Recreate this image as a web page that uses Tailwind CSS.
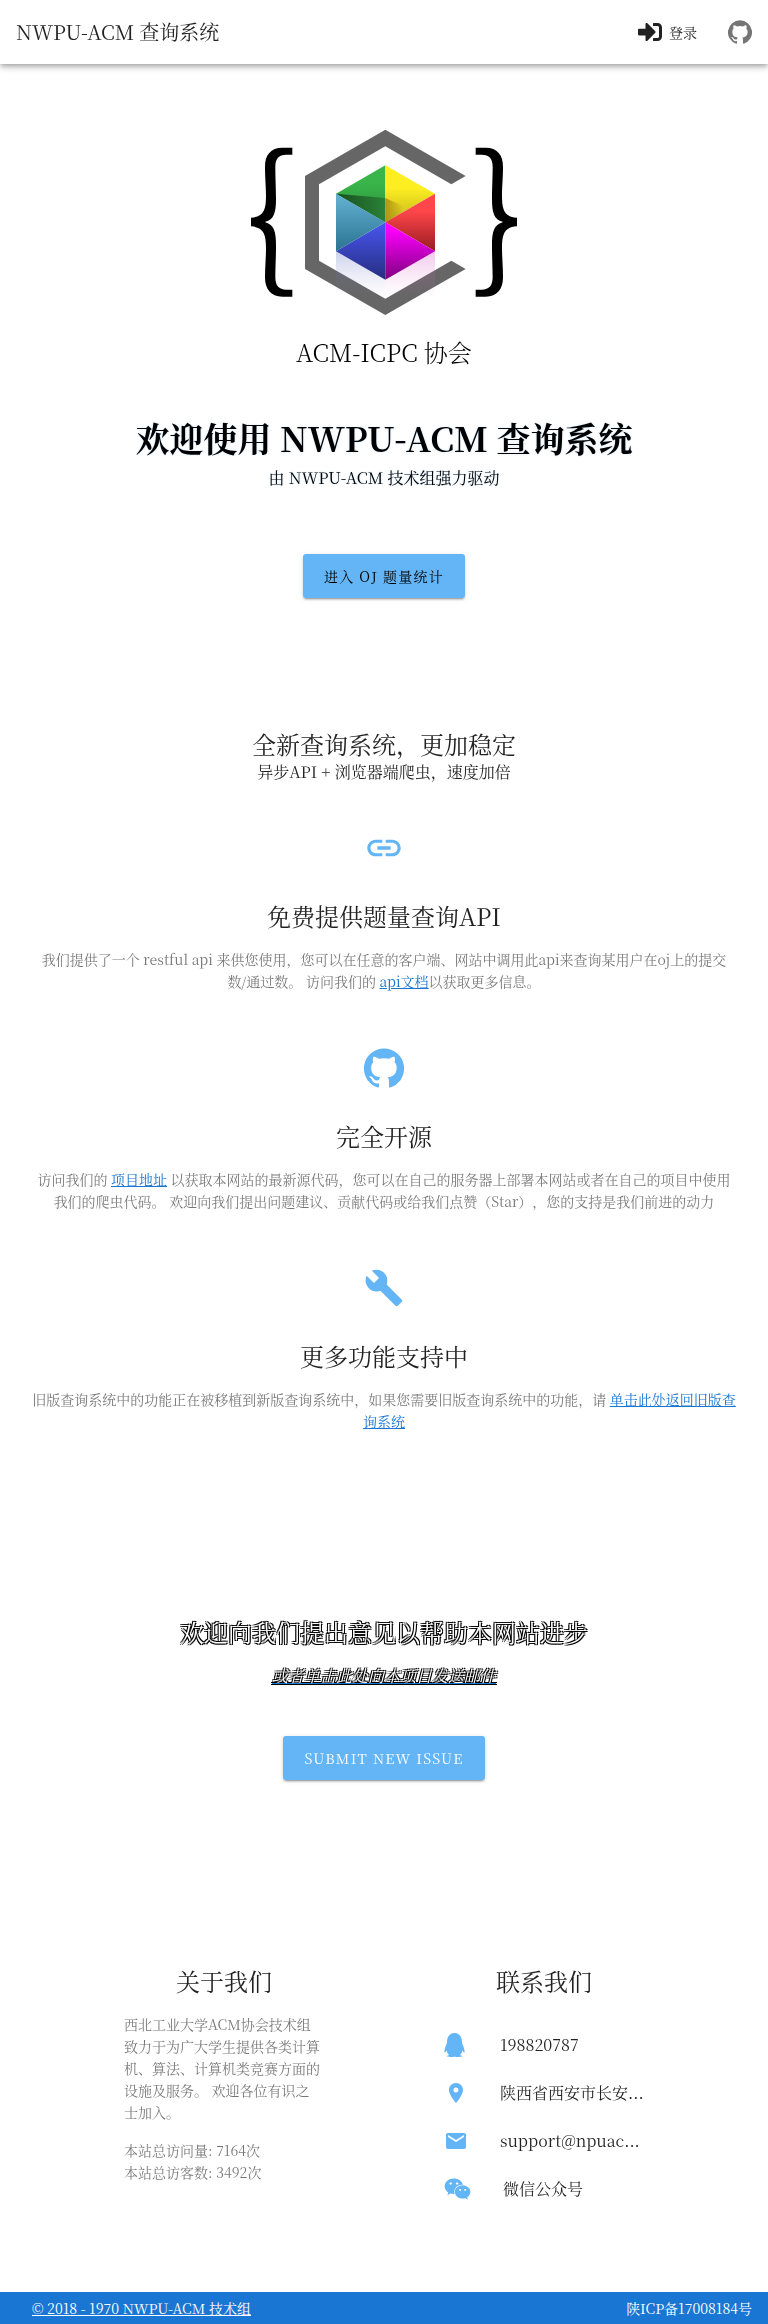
<!DOCTYPE html>
<html lang="zh-CN">
<head>
<meta charset="utf-8">
<meta name="viewport" content="width=device-width, initial-scale=1">
<title>NWPU-ACM 查询系统</title>
<script src="https://cdn.jsdelivr.net/npm/@tailwindcss/browser@4"></script>
</head>
<body class="bg-white font-['Noto_Serif_CJK_SC','Noto_Serif_SC','Source_Han_Serif_SC','Liberation_Serif','Noto_Sans_CJK_SC',serif] text-sm text-black/87 [text-spacing-trim:space-all]">
<svg class="hidden" aria-hidden="true">
  <symbol id="github" viewBox="0 0 24 24"><path fill="currentColor" d="M12 .3a12 12 0 0 0-3.8 23.4c.6.1.8-.3.8-.6v-2c-3.3.7-4-1.6-4-1.6-.6-1.4-1.4-1.8-1.4-1.8-1-.7.1-.7.1-.7 1.2 0 1.9 1.2 1.9 1.2 1 1.8 2.8 1.3 3.5 1 0-.8.4-1.3.7-1.6-2.7-.3-5.5-1.3-5.5-6 0-1.2.5-2.3 1.3-3.1-.2-.4-.6-1.6 0-3.2 0 0 1-.3 3.4 1.2a11.500 11.500 0 0 1 6 0c2.300-1.500 3.300-1.200 3.300-1.200.6 1.600.2 2.800 0 3.200.9.8 1.300 1.900 1.300 3.200 0 4.600-2.800 5.600-5.500 5.900.5.4.9 1 .9 2.200v3.300c0 .3.1.7.8.6A12 12 0 0 0 12 .3"/></symbol>
</svg>

<header class="relative flex h-16 items-center bg-white px-4 shadow-[0_2px_4px_-1px_rgba(0,0,0,.2),0_4px_5px_rgba(0,0,0,.14),0_1px_10px_rgba(0,0,0,.12)]">
  <h1 class="text-xl will-change-transform">NWPU-ACM 查询系统</h1>
  <nav class="ml-auto flex items-center gap-[31px] will-change-transform">
    <a href="#login" class="flex items-center gap-[7px]">
      <svg class="h-6 w-6" viewBox="0 0 512 512" fill="currentColor" aria-hidden="true"><path d="M416 448h-84c-6.600 0-12-5.400-12-12v-40c0-6.600 5.400-12 12-12h84c17.700 0 32-14.300 32-32V160c0-17.700-14.300-32-32-32h-84c-6.600 0-12-5.400-12-12V76c0-6.600 5.400-12 12-12h84c53 0 96 43 96 96v192c0 53-43 96-96 96zm-47-209L201 71c-15-15-41-4.500-41 17v96H24c-13.300 0-24 10.700-24 24v96c0 13.300 10.700 24 24 24h136v96c0 21.500 26 32 41 17l168-168c9.300-9.400 9.300-24.600 0-34z"/></svg>
      登录
    </a>
    <a href="#github" aria-label="GitHub" class="text-black/54"><svg class="h-6 w-6"><use href="#github"/></svg></a>
  </nav>
</header>

<main class="will-change-transform">
  <section class="flex flex-col items-center pt-16 text-center text-black">
    <svg class="h-[188px] w-[270px]" viewBox="57 55 810 564" role="img" aria-label="ACM-ICPC 协会">
      <defs>
        <linearGradient id="g" x2="0" y2="1"><stop stop-color="#39b54a" offset=".3"/><stop offset="1" stop-color="#2c8f3a"/></linearGradient>
        <linearGradient id="gd" x1="0" x2="1"><stop stop-color="#184f20"/><stop offset="1" stop-color="#2b8237"/></linearGradient>
        <linearGradient id="y" x2="0" y2="1"><stop stop-color="#fcee21" offset=".4"/><stop offset="1" stop-color="#c5b51b"/></linearGradient>
        <linearGradient id="yd"><stop stop-color="#ad9518"/><stop offset="1" stop-color="#ad9518" stop-opacity="0"/></linearGradient>
        <linearGradient id="r" x2="0" y2="1"><stop stop-color="#ff464b" offset=".3"/><stop offset="1" stop-color="#971c20"/></linearGradient>
        <linearGradient id="m" x2="0" y2="1"><stop stop-color="#ff00ff" offset=".1"/><stop offset="1" stop-color="#800080"/></linearGradient>
        <linearGradient id="b" x2="0" y2="1"><stop stop-color="#4856f0"/><stop offset="1" stop-color="#262e80"/></linearGradient>
        <linearGradient id="c" x2="0" y2="1"><stop stop-color="#65b2d3"/><stop offset="1" stop-color="#2a7391"/></linearGradient>
        <linearGradient id="s1" x2="0" y2="1"><stop stop-color="#4a62b8" stop-opacity=".28"/><stop offset="1" stop-color="#8080c0" stop-opacity="0"/></linearGradient>
        <linearGradient id="s2" x2="0" y2="1"><stop stop-color="#d14fc0" stop-opacity=".3"/><stop offset="1" stop-color="#e080d0" stop-opacity="0"/></linearGradient>
      </defs>
      <path fill="#666" d="M707 199 466 60 225 199V478L466 616 707 478 664 453 466 567 267 453V224L466 110 664 224z"/>
      <path fill="url(#s1)" d="M318 425 466 510V562H318z"/><path fill="url(#s2)" d="M615 425 466 510V562H615z"/>
      <path fill="url(#g)" d="M466 167 318 252 466 338z"/><path fill="url(#gd)" d="M318 252 466 265V338z"/>
      <path fill="url(#y)" d="M466 167 615 252 466 338z"/><path fill="url(#yd)" d="M466 265 520 290V307L466 338z"/>
      <path fill="url(#r)" d="M615 252V425L466 338z"/><path fill="url(#m)" d="M615 425 466 510V338z"/>
      <path fill="url(#b)" d="M466 510 318 425 466 338z"/><path fill="url(#c)" d="M318 425V252L466 338z"/>
      <path id="brace" fill="#000" d="M187 114H157C122 114 105 136 105 171C105 205 108 230 108 259C108 300 101 322 63 324V350C101 352 108 374 108 415C108 445 105 470 105 503C105 538 122 561 157 561H187V540H169C146 540 136 527 136 503C136 470 138 445 138 407C138 365 132 346 106 338V336C132 329 138 309 138 267C138 230 136 205 136 171C136 147 146 135 169 135H187z"/>
      <use href="#brace" transform="matrix(-1 0 0 1 924 0)"/>
    </svg>
    <p class="mt-5 text-2xl font-light">ACM-ICPC 协会</p>
    <h2 class="mt-[50px] text-[34px] leading-10 font-bold text-shadow-[0_0_2px_rgb(100_181_246/0.4)]">欢迎使用 NWPU-ACM 查询系统</h2>
    <p class="mt-2 text-base text-shadow-[0_0_2px_rgb(100_181_246/0.4)]">由 NWPU-ACM 技术组强力驱动</p>
    <button type="button" class="mt-16 h-11 rounded-[3px] bg-[#64b5f6] px-[21px] text-sm tracking-[0.09em] shadow-[0_3px_1px_-2px_rgba(0,0,0,.2),0_2px_2px_rgba(0,0,0,.14),0_1px_5px_rgba(0,0,0,.12)]">进入 OJ 题量统计</button>
  </section>

  <section class="px-8 pt-[130px] text-center">
    <h2 class="text-2xl">全新查询系统，更加稳定</h2>
    <p class="text-base">异步API + 浏览器端爬虫，速度加倍</p>

    <article class="mt-11">
      <svg class="mx-auto h-10 w-10 text-[#64b5f6]" viewBox="0 0 24 24" fill="currentColor" aria-hidden="true"><path d="M3.900 12c0-1.710 1.390-3.100 3.100-3.100h4V7H7c-2.760 0-5 2.240-5 5s2.240 5 5 5h4v-1.900H7c-1.710 0-3.100-1.390-3.100-3.100zM8 13h8v-2H8v2zm9-6h-4v1.900h4c1.710 0 3.100 1.390 3.100 3.100s-1.390 3.100-3.100 3.100h-4V17h4c2.760 0 5-2.240 5-5s-2.240-5-5-5z"/></svg>
      <h3 class="mt-8 text-2xl">免费提供题量查询API</h3>
      <p class="mt-4 leading-[22px] text-black/54">我们提供了一个 restful api 来供您使用，您可以在任意的客户端、网站中调用此api来查询某用户在oj上的提交<span class="whitespace-nowrap">数/通过数。</span> 访问我们的 <a href="#api" class="text-[#1976d2] underline">api文档</a>以获取更多信息。</p>
    </article>
    <article class="mt-14">
      <svg class="mx-auto h-10 w-10 text-[#64b5f6]" aria-hidden="true"><use href="#github"/></svg>
      <h3 class="mt-8 text-2xl">完全开源</h3>
      <p class="mt-4 leading-[22px] text-black/54">访问我们的 <a href="#repo" class="text-[#1976d2] underline">项目地址</a> 以获取本网站的最新源代码，您可以在自己的服务器上部署本网站或者在自己的项目中使用我们的爬虫代码。 欢迎向我们提出问题建议、贡献代码或给我们点赞（Star），您的支持是我们前进的动力</p>
    </article>
    <article class="mt-14">
      <svg class="mx-auto h-10 w-10 text-[#64b5f6]" viewBox="0 0 24 24" fill="currentColor" aria-hidden="true"><path d="M22.700 19l-9.100-9.100c.9-2.300.4-5-1.500-6.900-2-2-5-2.400-7.400-1.300L9 6 6 9 1.600 4.700C.4 7.100.9 10.100 2.900 12.100c1.900 1.900 4.600 2.400 6.900 1.500l9.100 9.100c.4.4 1 .4 1.400 0l2.300-2.300c.5-.4.5-1.100.1-1.400z"/></svg>
      <h3 class="mt-8 text-2xl">更多功能支持中</h3>
      <p class="mt-4 leading-[22px] text-black/54">旧版查询系统中的功能正在被移植到新版查询系统中，如果您需要旧版查询系统中的功能，请 <a href="#old" class="text-[#1976d2] underline">单击此处返回旧版查询系统</a></p>
    </article>
  </section>

  <section class="flex flex-col items-center pt-[184px] text-center text-white">
    <h2 class="text-2xl text-shadow-[1px_1px_#000,-1px_-1px_#000,1px_-1px_#000,-1px_1px_#000]">欢迎向我们提出意见以帮助本网站进步</h2>
    <a href="#mail" class="mt-4 text-base text-[#1976d2] underline text-shadow-[1px_1px_#000,-1px_-1px_#000,1px_-1px_#000,-1px_1px_#000]"><em class="text-white">或者单击此处向本项目发送邮件</em></a>
    <button type="button" class="mt-12 h-11 rounded-[3px] bg-[#64b5f6] px-[21px] text-sm tracking-[0.09em] shadow-[0_3px_1px_-2px_rgba(0,0,0,.2),0_2px_2px_rgba(0,0,0,.14),0_1px_5px_rgba(0,0,0,.12)]">SUBMIT NEW ISSUE</button>
  </section>

  <section class="mx-auto grid max-w-[640px] grid-cols-2 pt-[185px] pb-[79px]">
    <div class="mx-auto w-[232px] px-4">
      <h2 class="text-center text-2xl">关于我们</h2>
      <p class="mt-4 pr-1 leading-[22px] text-black/54">西北工业大学ACM协会技术组<br>致力于为广大学生提供各类计算机、算法、计算机类竞赛方面的设施及服务。 欢迎各位有识之士加入。</p>
      <p class="mt-4 leading-[22px] text-black/54">本站总访问量: 7164次<br>本站总访客数: 3492次</p>
    </div>
    <div class="mx-auto w-[232px] px-4">
      <h2 class="text-center text-2xl">联系我们</h2>
      <ul class="mt-6 text-base">
        <li class="flex h-12 items-center"><span class="w-14 shrink-0 text-[#64b5f6]"><svg class="h-6 w-[21px]" viewBox="0 0 448 512" fill="currentColor" aria-hidden="true"><path d="M433.754 420.445c-11.526 1.393-44.860-52.741-44.860-52.741 0 31.345-16.136 72.247-51.051 101.786 16.842 5.192 54.843 19.167 45.803 34.421-7.316 12.343-125.510 7.881-159.632 4.037-34.122 3.844-152.316 8.306-159.632-4.037-9.045-15.250 28.918-29.214 45.783-34.415-34.920-29.539-51.059-70.445-51.059-101.792 0 0-33.334 54.134-44.859 52.741-5.370-.65-12.424-29.644 9.347-99.704 10.261-33.024 21.995-60.478 40.144-105.779C60.683 98.063 108.982.006 224 0c113.737.006 163.156 96.133 160.264 214.963 18.118 45.223 29.912 72.850 40.144 105.778 21.768 70.060 14.716 99.053 9.346 99.704z"/></svg></span><span>198820787</span></li>
        <li class="flex h-12 items-center"><span class="w-14 shrink-0 text-[#64b5f6]"><svg class="h-6 w-6" viewBox="0 0 24 24" fill="currentColor" aria-hidden="true"><path d="M12 2C8.130 2 5 5.130 5 9c0 5.250 7 13 7 13s7-7.750 7-13c0-3.870-3.130-7-7-7zm0 9.500a2.500 2.500 0 1 1 0-5 2.500 2.500 0 0 1 0 5z"/></svg></span><span class="whitespace-nowrap">陕西省西安市长安...</span></li>
        <li class="flex h-12 items-center"><span class="w-14 shrink-0 text-[#64b5f6]"><svg class="h-6 w-6" viewBox="0 0 24 24" fill="currentColor" aria-hidden="true"><path d="M20 4H4c-1.100 0-2 .9-2 2v12c0 1.100.9 2 2 2h16c1.100 0 2-.9 2-2V6c0-1.100-.9-2-2-2zm0 4l-8 5-8-5V6l8 5 8-5v2z"/></svg></span><span class="whitespace-nowrap">support@npuac...</span></li>
        <li class="flex h-12 items-center"><span class="w-[59px] shrink-0 text-[#64b5f6]"><svg class="h-6 w-[27px]" viewBox="0 0 576 512" fill="currentColor" aria-hidden="true"><path d="M385.200 167.600c6.400 0 12.600.3 18.800 1.100C387.400 90.300 303.300 32 207.700 32 100.500 32 13 104.800 13 197.400c0 53.400 29.300 97.500 77.900 131.600l-19.300 58.600 68-34.100c24.400 4.800 43.800 9.700 68.200 9.700 6.200 0 12.100-.3 18.300-.8-4-12.900-6.200-26.600-6.200-40.800-.1-84.900 72.900-154 165.300-154zm-104.500-52.900c14.500 0 24.200 9.700 24.200 24.400 0 14.500-9.700 24.200-24.200 24.200-14.800 0-29.300-9.700-29.300-24.200.1-14.700 14.600-24.400 29.300-24.400zm-136.400 48.600c-14.500 0-29.300-9.700-29.300-24.200 0-14.800 14.800-24.400 29.300-24.400 14.800 0 24.400 9.700 24.400 24.400 0 14.600-9.600 24.200-24.400 24.200zM563 319.400c0-77.900-77.900-141.300-165.400-141.300-92.700 0-165.400 63.400-165.400 141.300S305 460.700 397.600 460.700c19.300 0 38.900-5.100 58.600-9.900l53.400 29.300-14.800-48.600C534 402.100 563 363.200 563 319.400zm-219.100-24.500c-9.700 0-19.300-9.700-19.300-19.600 0-9.700 9.700-19.300 19.300-19.300 14.800 0 24.400 9.700 24.400 19.300 0 10-9.700 19.600-24.400 19.600zm107.100 0c-9.700 0-19.300-9.700-19.300-19.600 0-9.700 9.700-19.300 19.300-19.300 14.500 0 24.400 9.700 24.400 19.300.1 10-9.900 19.600-24.400 19.600z"/></svg></span><span>微信公众号</span></li>
      </ul>
    </div>
  </section>
</main>

<footer class="flex h-8 items-center justify-between bg-[#1976d2] pr-4 pl-8 text-white">
  <a href="#team" class="underline">© 2018 - 1970 NWPU-ACM 技术组</a>
  <span>陕ICP备17008184号</span>
</footer>
</body>
</html>
